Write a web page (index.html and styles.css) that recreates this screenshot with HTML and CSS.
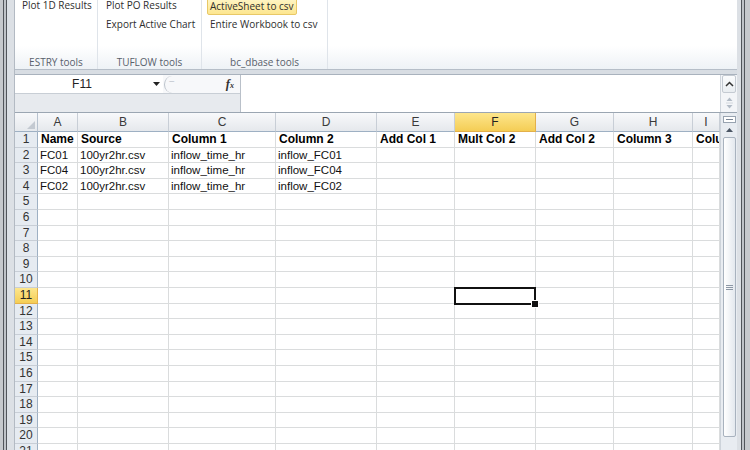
FILE: index.html
```html
<!DOCTYPE html>
<html lang="en">
<head>
    <meta charset="UTF-8">
    <meta name="viewport" content="width=device-width, initial-scale=1.0">
    <title>Book1 - Excel</title>
    <link rel="stylesheet" href="styles.css">
</head>
<body>
    <div class="window">
        <div class="frame frame-left"></div>
        <div class="app">
            <div class="ribbon">
                <div class="group group-estry">
                    <div class="items">
                        <div class="item">Plot 1D Results</div>
                    </div>
                    <div class="group-label">ESTRY tools</div>
                </div>
                <div class="group group-tuflow">
                    <div class="items">
                        <div class="item">Plot PO Results</div>
                        <div class="item">Export Active Chart</div>
                    </div>
                    <div class="group-label">TUFLOW tools</div>
                </div>
                <div class="group group-dbase">
                    <div class="items">
                        <div class="item"><span class="hot">ActiveSheet to csv</span></div>
                        <div class="item">Entire Workbook to csv</div>
                    </div>
                    <div class="group-label">bc_dbase tools</div>
                </div>
                <div class="ribbon-rest"></div>
            </div>

            <div class="formula-bar">
                <div class="name-area">
                    <div class="name-row">
                        <div class="name-box">
                            <span class="name-text">F11</span>
                            <span class="dropdown">
                                <svg width="7" height="4" viewBox="0 0 7 4"><path d="M0 0 L7 0 L3.5 4 Z" fill="#222"/></svg>
                            </span>
                        </div>
                        <div class="fx-area">
                            <span class="knob">&minus;</span>
                            <span class="fx">f<small>x</small></span>
                        </div>
                    </div>
                    <div class="name-row-2"></div>
                </div>
                <div class="formula-input"></div>
                <div class="formula-scroll">
                    <div class="fb-expand">
                        <svg width="9" height="6" viewBox="0 0 9 6"><polyline points="1,5 4.5,1.5 8,5" fill="none" stroke="#333" stroke-width="1.5"/></svg>
                    </div>
                    <div class="fb-arrows">
                        <svg width="9" height="14" viewBox="0 0 9 14"><path d="M1.5 5 L4.5 1.5 L7.5 5 Z M1.5 9 L4.5 12.5 L7.5 9 Z" fill="#b3bcc7"/><line x1="1" y1="7" x2="8" y2="7" stroke="#d3d8de"/></svg>
                    </div>
                </div>
            </div>

            <div class="sheet">
                <div class="grid" id="grid"></div>
                <div class="vscroll">
                    <div class="split"></div>
                    <div class="arrow-up">
                        <svg width="7" height="4" viewBox="0 0 7 4"><path d="M0 4 L3.5 0 L7 4 Z" fill="#4a5563"/></svg>
                    </div>
                    <div class="thumb"><span class="grip"></span></div>
                </div>
            </div>
        </div>
        <div class="frame frame-right"></div>
    </div>

    <script>
        const columns = ['A', 'B', 'C', 'D', 'E', 'F', 'G', 'H', 'I'];
        const data = [
            ['Name', 'Source', 'Column 1', 'Column 2', 'Add Col 1', 'Mult Col 2', 'Add Col 2', 'Column 3', 'Column 4'],
            ['FC01', '100yr2hr.csv', 'inflow_time_hr', 'inflow_FC01'],
            ['FC04', '100yr2hr.csv', 'inflow_time_hr', 'inflow_FC04'],
            ['FC02', '100yr2hr.csv', 'inflow_time_hr', 'inflow_FC02']
        ];
        const rowCount = 21;
        const activeCol = 'F';
        const activeRow = 11;

        const grid = document.getElementById('grid');

        function addCell(className, text) {
            const cell = document.createElement('div');
            cell.className = className;
            cell.textContent = text === undefined ? '' : text;
            grid.appendChild(cell);
        }

        addCell('corner');
        columns.forEach(col => addCell(col === activeCol ? 'col-head sel' : 'col-head', col));

        for (let r = 1; r <= rowCount; r++) {
            addCell(r === activeRow ? 'row-head sel' : 'row-head', r);
            const values = data[r - 1] || [];
            columns.forEach((col, i) => {
                let className = 'cell';
                if (r === 1) className += ' bold';
                if (r === activeRow && col === activeCol) className += ' active';
                addCell(className, values[i]);
            });
        }
    </script>
</body>
</html>
```

FILE: styles.css
```css
* {
    box-sizing: border-box;
}

body {
    margin: 0;
    width: 750px;
    height: 450px;
    overflow: hidden;
    font-family: "Liberation Sans", Arial, sans-serif;
    background: #d8dde3;
}

.window {
    display: flex;
    height: 450px;
}

.frame {
    flex: none;
}

.frame-left {
    width: 14px;
    background: linear-gradient(to right, #c6c9cd 0 3px, #51555b 3px 4px, #bfc3c8 4px 6px, #51555b 6px 7px, #dce0e5 7px 14px);
}

.frame-right {
    width: 13px;
    background: linear-gradient(to right, #dce0e5 0 4px, #51555b 4px 5px, #bfc3c8 5px 7px, #51555b 7px 8px, #c6c9cd 8px 13px);
}

.app {
    flex: 1;
    min-width: 0;
    display: flex;
    flex-direction: column;
    border-left: 1px solid #b3bac3;
}

/* ribbon */
.ribbon {
    height: 70px;
    display: flex;
    overflow: hidden;
    border-bottom: 1px solid #b6bec8;
    background: linear-gradient(#ffffff 0, #ffffff 46px, #eef2f6 69px);
    font-family: "Open Sans", "Noto Sans", sans-serif;
    font-size: 10px;
    color: #2e2e2e;
}

.group {
    display: flex;
    flex-direction: column;
    border-right: 1px solid #dfe4ea;
}

.group-estry {
    width: 83px;
}

.group-tuflow {
    width: 104px;
}

.group-dbase {
    width: 126px;
}

.ribbon-rest {
    flex: 1;
}

.items {
    flex: 1;
    margin-top: -5px;
    padding-left: 7px;
}

.group-tuflow .items,
.group-dbase .items {
    padding-left: 8px;
}

.item {
    height: 20px;
    line-height: 20px;
    white-space: nowrap;
}

.item + .item {
    margin-top: -1px;
}

.hot {
    display: inline-block;
    margin-left: -3px;
    padding: 0 2px;
    line-height: 16px;
    border: 1px solid #e8c867;
    border-radius: 2px;
    background: linear-gradient(#fef6c8, #fde68f);
    vertical-align: middle;
}

.group-label {
    height: 14px;
    line-height: 14px;
    text-align: center;
    color: #59616c;
}

/* formula bar */
.formula-bar {
    height: 38px;
    margin-top: 4px;
    display: flex;
    border-top: 1px solid #a9b2bd;
    background: #fff;
}

.name-area {
    width: 226px;
    display: flex;
    flex-direction: column;
    border-right: 1px solid #b9c0c9;
    background: #e7eaee;
}

.name-row {
    height: 19px;
    display: flex;
    background: #fff;
    border-bottom: 1px solid #c8ced5;
}

.name-box {
    width: 148px;
    display: flex;
    align-items: center;
}

.name-text {
    flex: 1;
    text-align: center;
    font-size: 12px;
    color: #222;
}

.dropdown {
    width: 14px;
    display: flex;
    justify-content: center;
}

.fx-area {
    flex: 1;
    display: flex;
    align-items: center;
    justify-content: space-between;
    padding-right: 6px;
    background: #f7f8fa;
}

.knob {
    width: 16px;
    height: 17px;
    margin-left: 1px;
    border-left: 1.5px solid #bcc3cb;
    border-radius: 50%;
    color: #bfc6ce;
    font-size: 10px;
    line-height: 12px;
    padding-left: 4px;
}

.fx {
    font-family: "Liberation Serif", "Times New Roman", serif;
    font-style: italic;
    font-weight: bold;
    font-size: 12.5px;
    color: #333;
}

.fx small {
    font-size: 8px;
}

.name-row-2 {
    flex: 1;
}

.formula-input {
    flex: 1;
    background: #fff;
}

.formula-scroll {
    width: 17px;
    display: flex;
    flex-direction: column;
    align-items: center;
    background: #f3f5f8;
    border-left: 1px solid #cfd5dc;
}

.fb-expand {
    width: 14px;
    height: 18px;
    display: flex;
    align-items: center;
    justify-content: center;
    border: 1px solid #c4cad2;
    border-radius: 2px;
    background: linear-gradient(#fbfcfd, #e9edf1);
}

.fb-arrows {
    margin-top: 3px;
    display: flex;
    justify-content: center;
}

/* sheet */
.sheet {
    flex: 1;
    min-height: 0;
    display: flex;
    border-top: 1px solid #9ba6b2;
    background: #fff;
}

.grid {
    flex: 1;
    min-width: 0;
    display: grid;
    grid-template-columns: 23px 40px 91px 107px 101px 78px 81px 78px 79px 1fr;
    grid-template-rows: 19px;
    grid-auto-rows: 15.6px;
    align-content: start;
    overflow: hidden;
    font-size: 11.5px;
    color: #111;
}

.corner {
    position: relative;
    background: linear-gradient(#f7f8fa, #e6e9ed);
    border-right: 1px solid #b7c2cf;
    border-bottom: 1px solid #9eb0c3;
}

.corner::after {
    content: "";
    position: absolute;
    right: 2px;
    bottom: 2px;
    border-style: solid;
    border-width: 0 0 8px 8px;
    border-color: transparent transparent #c3c9d1 transparent;
}

.col-head {
    text-align: center;
    line-height: 18px;
    font-size: 12px;
    color: #3a3a3a;
    background: linear-gradient(#f8f9fb, #e5e8ec);
    border-right: 1px solid #c8ced6;
    border-bottom: 1px solid #9eb0c3;
}

.row-head {
    text-align: center;
    line-height: 15px;
    font-size: 12px;
    color: #333;
    background: #e6ebf1;
    border-right: 1px solid #9eb0c3;
    border-bottom: 1px solid #c8ced6;
}

.col-head.sel,
.row-head.sel {
    background: linear-gradient(#fde68c, #f4cd55);
    border-color: #e3b04a;
    color: #222;
}

.cell {
    padding: 0 2px;
    line-height: 15px;
    white-space: nowrap;
    overflow: hidden;
    border-right: 1px solid #dadcdd;
    border-bottom: 1px solid #dadcdd;
}

.cell.bold {
    font-weight: bold;
    font-size: 12px;
    color: #000;
    padding-left: 3px;
}

.cell.active {
    position: relative;
    overflow: visible;
}

.cell.active::after {
    content: "";
    position: absolute;
    top: -1px;
    left: -1px;
    right: -1px;
    bottom: -2px;
    border: 2px solid #111;
    z-index: 2;
}

.cell.active::before {
    content: "";
    position: absolute;
    right: -4px;
    bottom: -5px;
    width: 6px;
    height: 6px;
    background: #111;
    border: 1px solid #fff;
    z-index: 3;
}

/* vertical scrollbar */
.vscroll {
    width: 17px;
    display: flex;
    flex-direction: column;
    align-items: center;
    background: #e8ecf1;
    border-left: 1px solid #cdd3da;
}

.split {
    width: 13px;
    height: 7px;
    margin-top: 3px;
    position: relative;
    background: #fff;
    border: 1px solid #98a3b0;
}

.split::after {
    content: "";
    position: absolute;
    left: 2px;
    right: 2px;
    top: 2px;
    height: 1px;
    background: #7a8696;
}

.arrow-up {
    height: 14px;
    display: flex;
    align-items: center;
    justify-content: center;
}

.thumb {
    width: 13px;
    height: 300px;
    display: flex;
    align-items: center;
    justify-content: center;
    border: 1px solid #a8b2be;
    border-radius: 2px;
    background: linear-gradient(to right, #ffffff, #e3e8ee);
}

.grip {
    width: 7px;
    height: 5px;
    border-top: 1px solid #8c97a5;
    border-bottom: 1px solid #8c97a5;
    position: relative;
}

.grip::after {
    content: "";
    position: absolute;
    left: 0;
    right: 0;
    top: 1px;
    height: 1px;
    background: #8c97a5;
}
```
